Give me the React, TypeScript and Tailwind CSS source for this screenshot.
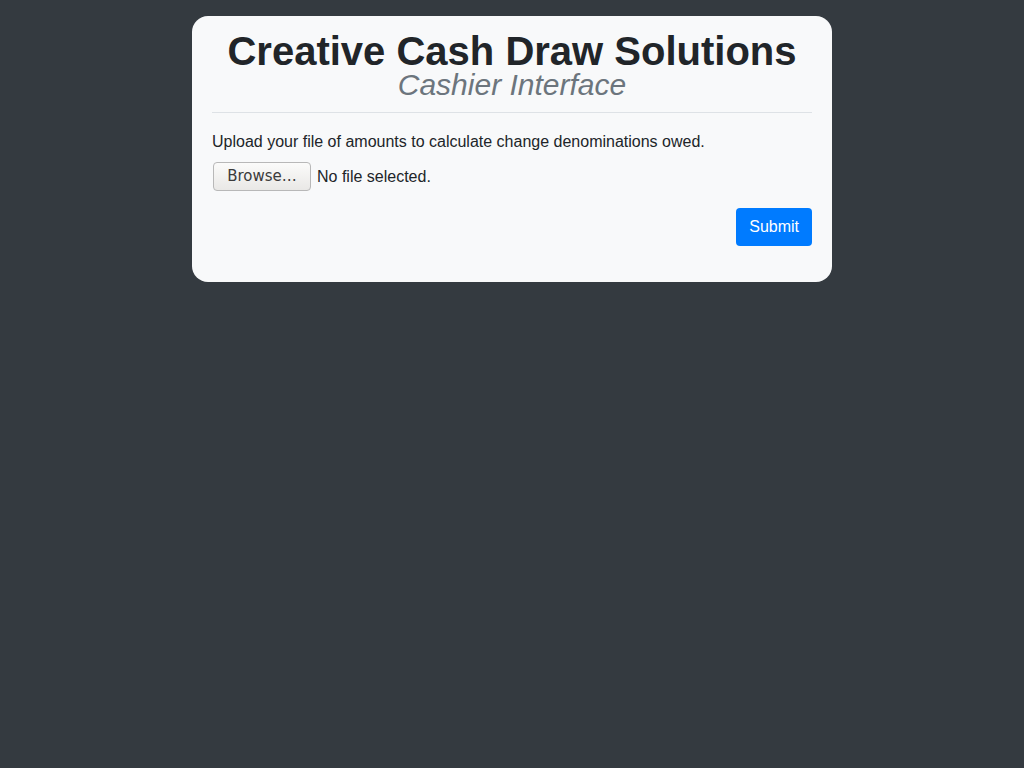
export default function App() {
  return (
    <div
      className="min-h-screen bg-[#343a40] pt-4"
      style={{ fontFamily: '"Liberation Sans", Arial, sans-serif' }}
    >
      <div className="mx-auto w-[640px] rounded-2xl bg-[#f8f9fa] px-5 pt-[15px] pb-9 text-[#212529]">
        {/* Header */}
        <div className="text-center">
          <h1 className="text-[40px] font-bold leading-[40px]">Creative Cash Draw Solutions</h1>
          <h2 className="text-[30px] italic leading-[28px] text-[#6c757d]">Cashier Interface</h2>
        </div>
        <hr className="mt-[13px] border-t border-[#dee2e6]" />

        {/* Form */}
        <p className="mt-[17px] text-base leading-6">
          Upload your file of amounts to calculate change denominations owed.
        </p>
        <div className="mt-[8px] flex items-center gap-[6px]">
          <button
            className="h-[29px] w-[98px] ml-px rounded-[4px] border border-[#b8b8b8] bg-gradient-to-b from-[#fbfbfa] to-[#e9e8e6] text-[#3b3b3b]"
            style={{ fontFamily: '"DejaVu Sans", "Liberation Sans", sans-serif', fontSize: 15 }}
          >
            Browse…
          </button>
          <span className="text-base">No file selected.</span>
        </div>
        <div className="mt-[17px] flex justify-end">
          <button className="h-[38px] rounded-[4px] bg-[#007bff] px-[13px] text-base text-white">
            Submit
          </button>
        </div>
      </div>
    </div>
  );
}
